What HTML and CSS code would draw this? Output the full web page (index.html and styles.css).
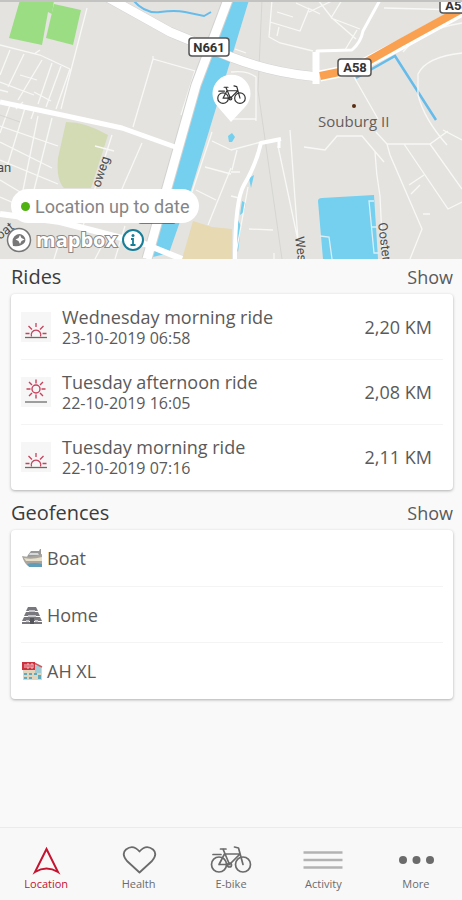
FILE: index.html
```html
<!DOCTYPE html>
<html lang="en">
<head>
  <meta charset="UTF-8" />
  <meta name="viewport" content="width=device-width, initial-scale=1.0" />
  <title>Location</title>
  <link rel="stylesheet" href="styles.css">
</head>
<body>

<svg class="symbols" aria-hidden="true">
  <symbol id="bike" viewBox="0 0 44 30">
    <g fill="none" stroke="currentColor" stroke-width="1.700" stroke-linecap="round" stroke-linejoin="round">
      <circle cx="10" cy="19.500" r="7.500"/>
      <circle cx="34" cy="19.500" r="7.500"/>
      <path d="M10 19.500L15.500 9H30M14 4l6.500 15.500L31 9M10 19.500H20M34 19.500L29.500 3L25.500 2M11.500 4H17M4 9.500H12"/>
      <circle cx="20.500" cy="20" r="2"/>
    </g>
  </symbol>
  <symbol id="sunrise" viewBox="0 0 30 30">
    <g fill="none" stroke="#c8415c" stroke-width="1.300">
      <path d="M10.500 24.500A4.800 4.800 0 1 1 19.500 24.500M15 11v4M7.500 14l3.500 3.500M22.500 14L19 17.500M4.500 21.500h4M21.500 21.500h4"/>
      <path d="M4 25.500H26" stroke="#7a6468"/>
    </g>
  </symbol>
  <symbol id="sun" viewBox="0 0 30 30">
    <g fill="none" stroke="#c8415c" stroke-width="1.400">
      <circle cx="15" cy="12" r="4"/>
      <path d="M15 2.500v4M15 17.500v4M5.500 12h4M20.500 12h4M8 5l3 3M22 5l-3 3M8 19l3-3M22 19l-3-3"/>
      <path d="M4 25H26" stroke="#777"/>
    </g>
  </symbol>
</svg>

<header class="map">
  <svg class="map-canvas" viewBox="0 0 462 259" role="img" aria-label="Map of the bike location">
    <rect width="462" height="259" fill="#e4e3e0"/>

    <!-- parks and fields -->
    <path d="M20 0H54L52 14L48 12L42 45L9 38Z" fill="#9bdd82"/>
    <path d="M54 4L81 10L73 45L46 38Z" fill="#9bdd82"/>
    <path d="M66 122Q86 122 108 135L91 188H64Q56 180 58 158Z" fill="#d3dbb4"/>
    <path d="M193 221L212 227L232 229V259H182Z" fill="#e7d9b2"/>

    <!-- water -->
    <path d="M227 0H249L191 190L169 253L145 259L186 130Z" fill="#75cfee"/>
    <path d="M318 201Q318 198 322 198L374 195L378 259H323Z" fill="#75cfee"/>
    <path d="M228 136l4-3 3 4-3 5h-3zM249 178l5-3-3 13zM242 201l4 2-2 9-4 3zM238 220l3 6-3 26-2-4z" fill="#75cfee"/>
    <g fill="none" stroke="#65bceb" stroke-width="2">
      <path d="M133 0Q145 14 160 12T185 12L204 16L211 12"/>
      <path d="M356 78L395 56L436 120" stroke-width="2.500"/>
    </g>

    <!-- streets -->
    <g fill="none" stroke="#f8f8f6" stroke-width="1.300">
      <path d="M0 45L40 55L70 69M10 50L0 75M24 54L8 87M42 60L18 100M52 63L38 104M61 66L46 107M70 69L56 109M87 8L61 109M40 50L34 54M0 82L34 95M20 75L37 80M0 90L8 92M34 92L51 101"/>
      <path d="M133 127L153 59L195 71L181 115M153 59V56"/>
      <path d="M0 126L58 146M10 105L0 133M25 108L6 170M38 116L21 200M52 118L34 190M0 142L52 168M0 160L58 184M0 180L42 205M0 197L28 209M23 102L16 109M35 108L31 119"/>
      <path d="M112 135L83 226M142 143L115 205M114 151L95 146M70 214L91 221M100 190L162 213"/>
      <path d="M212 141L231 150M205 167L231 174M212 132L192 192M196 190L216 200M231 168L208 225"/>
      <path d="M272 0L269 37L280 43L313 51M270 22L300 31L309 9L296 3M279 27L277 36M293 17L277 12M318 0L332 18L356 39M331 18L360 29M309 12L334 0M331 18L342 0M345 50L357 30M308 8L320 14M384 8L462 10"/>
      <path d="M231 72Q247 70 256 77V121M231 119H256M235 49L246 53"/>
      <path d="M354 77L378 119M403 52Q420 30 462 23M462 53Q426 57 418 74V95Q424 119 447 145"/>
      <path d="M304 147L325 150L337 136H362L378 155L384 162M376 132L387 144L430 144L448 131M387 144L390 155L422 229L410 259M404 144L448 209L462 202M430 144L462 189M409 185L424 175M411 194L420 185M423 214H430M375 152Q376 174 380 196L383 259M443 130L462 140"/>
      <path d="M278 146L300 250V259M290 130L298 240M248 187L235 259M249 229L273 230M231 150L261 142M231 172H240M237 150L232 170M231 196L239 198M274 253V259"/>
      <path d="M320 236L329 237L332 259M374 201H369L374 253H379M371 227H377" stroke="#d8eff8"/>
      <path d="M0 232L24 236M60 240L54 259M105 240L95 259M125 226L115 259"/>
    </g>
    <path d="M262 0L258 90L282 259M0 115L20 122" fill="none" stroke="#d6d5d1"/>

    <!-- main roads -->
    <g fill="none" stroke="#d2d2d1" stroke-linejoin="round">
      <path d="M229 -3L196 85L147 259" stroke-width="11"/>
      <path d="M98 -8L170 32L231 57Q270 72 310 76L318 77" stroke-width="10"/>
    </g>
    <g fill="none" stroke="#fff" stroke-linejoin="round">
      <path d="M0 102L62 115L122 128L178 148" stroke-width="5"/>
      <path d="M0 214L60 222L145 244L182 259" stroke-width="6"/>
      <path d="M229 -3L196 85L147 259" stroke-width="9"/>
      <path d="M98 -8L170 32L231 57Q270 72 310 76L318 77" stroke-width="9"/>
      <path d="M317 84V51L352 50Q361 42 363 31L380 0" stroke-width="3"/>
      <path d="M316 84V52" stroke-width="7"/>
      <path d="M281 139L261 143Q256 165 244 185Q235 200 235 259" stroke-width="4"/>
      <path d="M279 138V148" stroke-width="3"/>
    </g>
    <path d="M320 76L354 69L400 45L462 11" fill="none" stroke="#fff" stroke-width="11"/>
    <path d="M320 76L354 69L400 43L462 9" fill="none" stroke="#faa151" stroke-width="8"/>

    <!-- road shields -->
    <g fill="#fff" stroke="#555" stroke-width="1.500">
      <rect x="189" y="38" width="40" height="18" rx="3"/>
      <rect x="338" y="59" width="33" height="17" rx="3"/>
      <rect x="440" y="-4" width="34" height="17" rx="3"/>
      <rect x="138" y="206" width="38" height="17" rx="3"/>
    </g>
    <g class="shield-text">
      <text x="209" y="52">N661</text>
      <text x="355" y="72">A58</text>
      <text x="457" y="10">A58</text>
    </g>

    <!-- place names -->
    <circle cx="354" cy="106" r="2" fill="#5a2c12"/>
    <g class="place-text">
      <text class="town" x="318" y="127">Souburg II</text>
      <text x="-3" y="172">an</text>
      <text transform="translate(100 188) rotate(-72)">oweg</text>
      <text transform="translate(0 240) rotate(-38)">oat</text>
      <text transform="translate(295 237) rotate(83)">Westerweg</text>
      <text transform="translate(378 223) rotate(83)">Oosterweg</text>
    </g>

    <!-- bike pin -->
    <path d="M231 122L218 107A19 19 0 1 1 245 107Z" fill="#fff"/>
    <use class="pin-bike" href="#bike" x="216" y="84" width="31" height="22"/>
    <rect width="462" height="2" fill="#c3c3c2"/>
  </svg>

  <div class="map-overlay">
    <p class="status"><span class="status-dot"></span>Location up to date</p>
    <div class="attribution">
      <svg class="mapbox-mark" viewBox="0 0 26 26" aria-hidden="true">
        <circle cx="13" cy="13" r="11.500" fill="#fff" stroke="#777" stroke-width="1.500"/>
        <path d="M7 19Q5 10 11 7.500A6 6 0 0 1 19 15Q16 20 7 19Z" fill="#777"/>
        <path d="M14 8l1.500 3 3 1.500-3 1.500-1.500 3-1.500-3-3-1.500 3-1.500z" fill="#fff"/>
      </svg>
      <span class="mapbox-name">mapbox</span>
      <button class="info-button" type="button" aria-label="Map information">
        <svg viewBox="0 0 24 24" aria-hidden="true">
          <circle cx="12" cy="12" r="10" fill="#fff" stroke="#187e98" stroke-width="2"/>
          <circle cx="12" cy="7.500" r="1.500" fill="#187e98"/>
          <path d="M10 11h2v6M9.500 17h5" fill="none" stroke="#187e98" stroke-width="1.800"/>
        </svg>
      </button>
    </div>
  </div>
</header>

<main>
  <section>
    <div class="section-head">
      <h2>Rides</h2>
      <a href="#rides">Show</a>
    </div>
    <ul class="card" id="rides">
      <li class="ride">
        <svg class="ride-icon" aria-hidden="true"><use href="#sunrise"/></svg>
        <div class="ride-info">
          <h3>Wednesday morning ride</h3>
          <p>23-10-2019 06:58</p>
        </div>
        <span class="distance">2,20 KM</span>
      </li>
      <li class="ride">
        <svg class="ride-icon" aria-hidden="true"><use href="#sun"/></svg>
        <div class="ride-info">
          <h3>Tuesday afternoon ride</h3>
          <p>22-10-2019 16:05</p>
        </div>
        <span class="distance">2,08 KM</span>
      </li>
      <li class="ride">
        <svg class="ride-icon" aria-hidden="true"><use href="#sunrise"/></svg>
        <div class="ride-info">
          <h3>Tuesday morning ride</h3>
          <p>22-10-2019 07:16</p>
        </div>
        <span class="distance">2,11 KM</span>
      </li>
    </ul>
  </section>

  <section>
    <div class="section-head">
      <h2>Geofences</h2>
      <a href="#geofences">Show</a>
    </div>
    <ul class="card" id="geofences">
      <li class="fence">
        <svg viewBox="0 0 22 22" aria-hidden="true">
          <path d="M7 8L10 4H18L19 2H20V10H6Z" fill="#999"/>
          <path d="M9 6h8l1 2H8z" fill="#d5d9da"/>
          <path d="M1 9Q10 11 21 7V19H7Q3 16 1 9Z" fill="#aaa69f"/>
          <path d="M3 11Q11 13 21 10V14H5Z" fill="#e6dfc9"/>
          <path d="M6 17Q13 15 21 17V20H8Z" fill="#5f9db8"/>
        </svg>
        Boat
      </li>
      <li class="fence">
        <svg viewBox="0 0 22 22" aria-hidden="true">
          <path d="M7 3H15L17 7H5ZM5 8H17L19 12H3ZM3 13H19L21 17H1ZM1 18H21V20H1Z" fill="#77777d"/>
          <path d="M8 6h6v2H8zM7 11h8v2H7zM5 16h3v2H5zM14 16h3v2h-3z" fill="#c5c5ca"/>
          <path d="M9 14h4v6H9z" fill="#55555c"/>
        </svg>
        Home
      </li>
      <li class="fence">
        <svg viewBox="0 0 22 22" aria-hidden="true">
          <path d="M2 8L14 3L21 7V20H2Z" fill="#e2d5bd"/>
          <path d="M14 6h6v7h-6z" fill="#9fcbd4"/>
          <path d="M13 3L21 7" stroke="#cf5a5e" stroke-width="1.500"/>
          <path d="M1 2H14V10H1Z" fill="#cb3340"/>
          <path d="M4 4v4M6 4h2v4H6zM10 4h2v4h-2z" fill="none" stroke="#f3c7ca"/>
          <path d="M3 13h3v2H3zM8 13h3v2H8zM13 13h3v2h-3zM3 17h3v2H3zM8 17h3v2H8zM17 15h3v4h-3z" fill="#5faabd"/>
        </svg>
        AH XL
      </li>
    </ul>
  </section>
</main>

<nav class="tabs">
  <a class="tab active" href="#location">
    <svg viewBox="0 0 44 30" aria-hidden="true"><path d="M22.500 4L34 27Q22.500 20 11 27Z" fill="none" stroke="currentColor" stroke-width="2"/></svg>
    Location
  </a>
  <a class="tab" href="#health">
    <svg viewBox="0 0 44 30" aria-hidden="true"><path d="M22.500 27.500L10 16Q4 9 9 4.500Q16-1 22.500 6.500Q29-1 36 4.500Q41 9 35 16Z" fill="none" stroke="currentColor" stroke-width="1.800" stroke-linejoin="round"/></svg>
    Health
  </a>
  <a class="tab" href="#e-bike">
    <svg viewBox="0 0 44 30" aria-hidden="true"><use href="#bike"/></svg>
    E-bike
  </a>
  <a class="tab" href="#activity">
    <svg viewBox="0 0 44 30" aria-hidden="true"><path d="M2.500 7.500H41.500M2.500 15H41.500M2.500 22.500H41.500" stroke="#b2b2b2" stroke-width="2.500"/></svg>
    Activity
  </a>
  <a class="tab" href="#more">
    <svg viewBox="0 0 44 30" aria-hidden="true"><g fill="currentColor"><circle cx="9" cy="15" r="4"/><circle cx="22.500" cy="15" r="4"/><circle cx="36" cy="15" r="4"/></g></svg>
    More
  </a>
</nav>

</body>
</html>
```
FILE: styles.css
```css
* {
  box-sizing: border-box;
  margin: 0;
  padding: 0;
}
body {
  display: flex;
  flex-direction: column;
  min-height: 100vh;
  font-family: 'Open Sans', sans-serif;
  background: #f9f9f9;
  color: #5a5a5a;
}
a {
  color: inherit;
  text-decoration: none;
}
ul {
  list-style: none;
}
.symbols {
  position: absolute;
  width: 0;
  height: 0;
}

/* map */
.map {
  position: relative;
}
.map-canvas {
  display: block;
  width: 100%;
}
.shield-text {
  font-family: Roboto, sans-serif;
  font-size: 13px;
  font-weight: 700;
  fill: #333;
  text-anchor: middle;
}
.place-text {
  font-family: Roboto, sans-serif;
  font-size: 13px;
  fill: #4c4c4c;
}
.town {
  font-family: 'Open Sans', sans-serif;
  font-size: 15px;
  fill: #665d59;
}
.pin-bike {
  color: #333;
}
.map-overlay {
  position: absolute;
  left: 0;
  bottom: 0;
  padding: 0 6px 6px;
}
.status {
  display: flex;
  align-items: center;
  gap: 5px;
  width: fit-content;
  height: 34px;
  margin-left: 5px;
  padding: 0 10px;
  border-radius: 17px;
  background: #fff;
  color: #858585;
  font-family: Roboto, sans-serif;
  font-size: 18px;
}
.status-dot {
  width: 9px;
  height: 9px;
  border-radius: 50%;
  background: #50b210;
}
.attribution {
  display: flex;
  align-items: center;
  gap: 4px;
  margin-top: 4px;
}
.mapbox-mark {
  width: 26px;
  height: 26px;
}
.mapbox-name {
  color: #fff;
  font-family: 'Open Sans', sans-serif;
  font-size: 20px;
  font-weight: 700;
  line-height: 24px;
  -webkit-text-stroke: 2px #888;
  paint-order: stroke fill;
}
.info-button {
  width: 24px;
  height: 24px;
  border: none;
  background: none;
}
.info-button svg {
  display: block;
}

/* lists */
main {
  flex: 1;
  padding: 0 9px 0 11px;
}
.section-head {
  display: flex;
  align-items: center;
  justify-content: space-between;
  height: 35px;
  font-size: 18px;
}
h2 {
  color: #3c3c3c;
  font-size: 20px;
  font-weight: 400;
}
.card {
  margin-bottom: 5px;
  padding: 0 10px 1px;
  border-radius: 4px;
  background: #fff;
  box-shadow: 0 1px 3px rgba(0, 0, 0, 0.3);
}
.card li {
  display: flex;
  align-items: center;
}
.card li + li {
  border-top: 1px solid #f4f4f4;
}
.ride {
  gap: 11px;
  height: 65px;
}
.ride-icon {
  width: 30px;
  height: 30px;
  background: #f6f6f6;
}
.ride-info {
  flex: 1;
}
h3 {
  font-size: 18px;
  font-weight: 400;
  line-height: 22px;
}
.ride-info p {
  font-size: 16px;
  line-height: 20px;
}
.distance {
  margin-right: 11px;
  font-size: 18px;
}
.fence {
  gap: 4px;
  height: 56px;
  font-size: 18px;
}
.fence svg {
  width: 22px;
  height: 22px;
}

/* bottom tabs */
.tabs {
  display: flex;
  height: 73px;
  padding-top: 17px;
  border-top: 1px solid #ebebeb;
  background: #f8f8f8;
}
.tab {
  display: flex;
  flex: 1;
  flex-direction: column;
  align-items: center;
  color: #6b6b6b;
  font-size: 11px;
  line-height: 18px;
}
.tab svg {
  width: 44px;
  height: 30px;
}
.tab.active {
  color: #c4122f;
}
```
